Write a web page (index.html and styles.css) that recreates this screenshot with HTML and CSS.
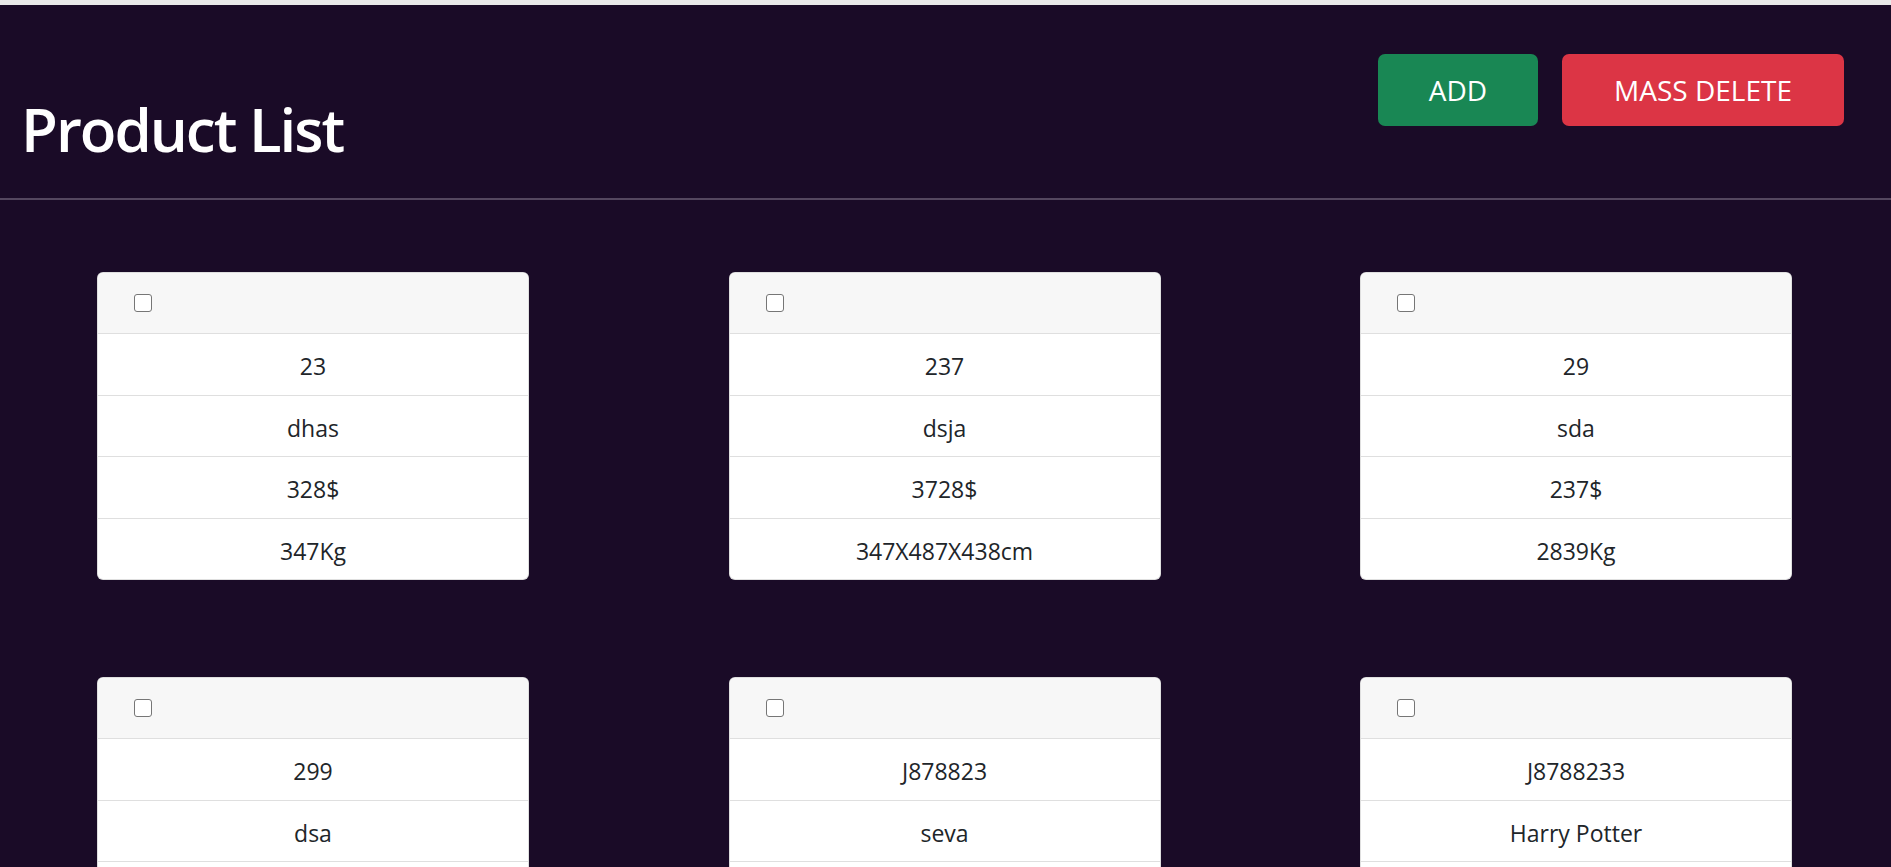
FILE: index.html
```html
<!DOCTYPE html>
<html lang="en">
<head>
<meta charset="utf-8">
<title>Product List</title>
<link rel="stylesheet" href="styles.css">
</head>
<body>
<div class="topstrip"></div>
<header class="header">
  <h1 class="title">Product List</h1>
  <div class="actions">
    <button class="btn btn-add">ADD</button>
    <button class="btn btn-delete">MASS DELETE</button>
  </div>
</header>
<main class="grid">
  <div class="card">
    <div class="card-header"><input type="checkbox" class="check"></div>
    <div class="item">23</div><div class="item">dhas</div><div class="item">328$</div><div class="item">347Kg</div>
  </div>
  <div class="card">
    <div class="card-header"><input type="checkbox" class="check"></div>
    <div class="item">237</div><div class="item">dsja</div><div class="item">3728$</div><div class="item">347X487X438cm</div>
  </div>
  <div class="card">
    <div class="card-header"><input type="checkbox" class="check"></div>
    <div class="item">29</div><div class="item">sda</div><div class="item">237$</div><div class="item">2839Kg</div>
  </div>
  <div class="card">
    <div class="card-header"><input type="checkbox" class="check"></div>
    <div class="item">299</div><div class="item">dsa</div><div class="item">32$</div><div class="item">12MB</div>
  </div>
  <div class="card">
    <div class="card-header"><input type="checkbox" class="check"></div>
    <div class="item">J878823</div><div class="item">seva</div><div class="item">20$</div><div class="item">2Kg</div>
  </div>
  <div class="card">
    <div class="card-header"><input type="checkbox" class="check"></div>
    <div class="item">J8788233</div><div class="item">Harry Potter</div><div class="item">20$</div><div class="item">1Kg</div>
  </div>
</main>
</body>
</html>
```
FILE: styles.css
```css
html, body {
  margin: 0;
  padding: 0;
}
body {
  background: #1a0b27;
  font-family: "Open Sans", "Noto Sans", sans-serif;
  color: #212529;
  overflow: hidden;
}
.topstrip {
  height: 5px;
  background: #e9e9e9;
}
.header {
  display: flex;
  justify-content: space-between;
  align-items: flex-start;
  padding: 0 47px 0 21px;
  border-bottom: 2px solid #54475f;
}
.title {
  margin: 88px 0 33px;
  font-size: 60px;
  line-height: 72px;
  font-weight: 600;
  color: #ffffff;
  letter-spacing: -2px;
}
.actions {
  display: flex;
  gap: 24px;
  margin-top: 49px;
}
.btn {
  height: 72px;
  padding: 0 24px;
  border: none;
  border-radius: 7px;
  font-family: "Open Sans", "Noto Sans", sans-serif;
  font-size: 28px;
  color: #ffffff;
  cursor: pointer;
}
.btn-add {
  width: 160px;
  background: #198754;
}
.btn-delete {
  width: 282px;
  background: #dc3545;
}
.grid {
  display: grid;
  grid-template-columns: repeat(3, 432px);
  justify-content: space-between;
  align-items: start;
  row-gap: 97px;
  padding: 72px 99px 0 97px;
}
.card {
  width: 432px;
  box-sizing: border-box;
  background: #ffffff;
  border: 1px solid rgba(0, 0, 0, 0.125);
  border-radius: 6px;
  overflow: hidden;
}
.card-header {
  height: 61px;
  background: #f7f7f7;
  border-bottom: 1px solid #dfdfdf;
  display: flex;
  align-items: center;
  padding-left: 36px;
  box-sizing: border-box;
}
.check {
  appearance: none;
  -webkit-appearance: none;
  width: 18px;
  height: 18px;
  margin: 0;
  border: 1.5px solid #767676;
  border-radius: 3px;
  background: #ffffff;
  box-sizing: border-box;
}
.item {
  padding: 14px 24px 10px;
  line-height: 36.5px;
  font-size: 23px;
  text-align: center;
  border-top: 1px solid #dfdfdf;
}
.card-header + .item {
  border-top: none;
}
```
